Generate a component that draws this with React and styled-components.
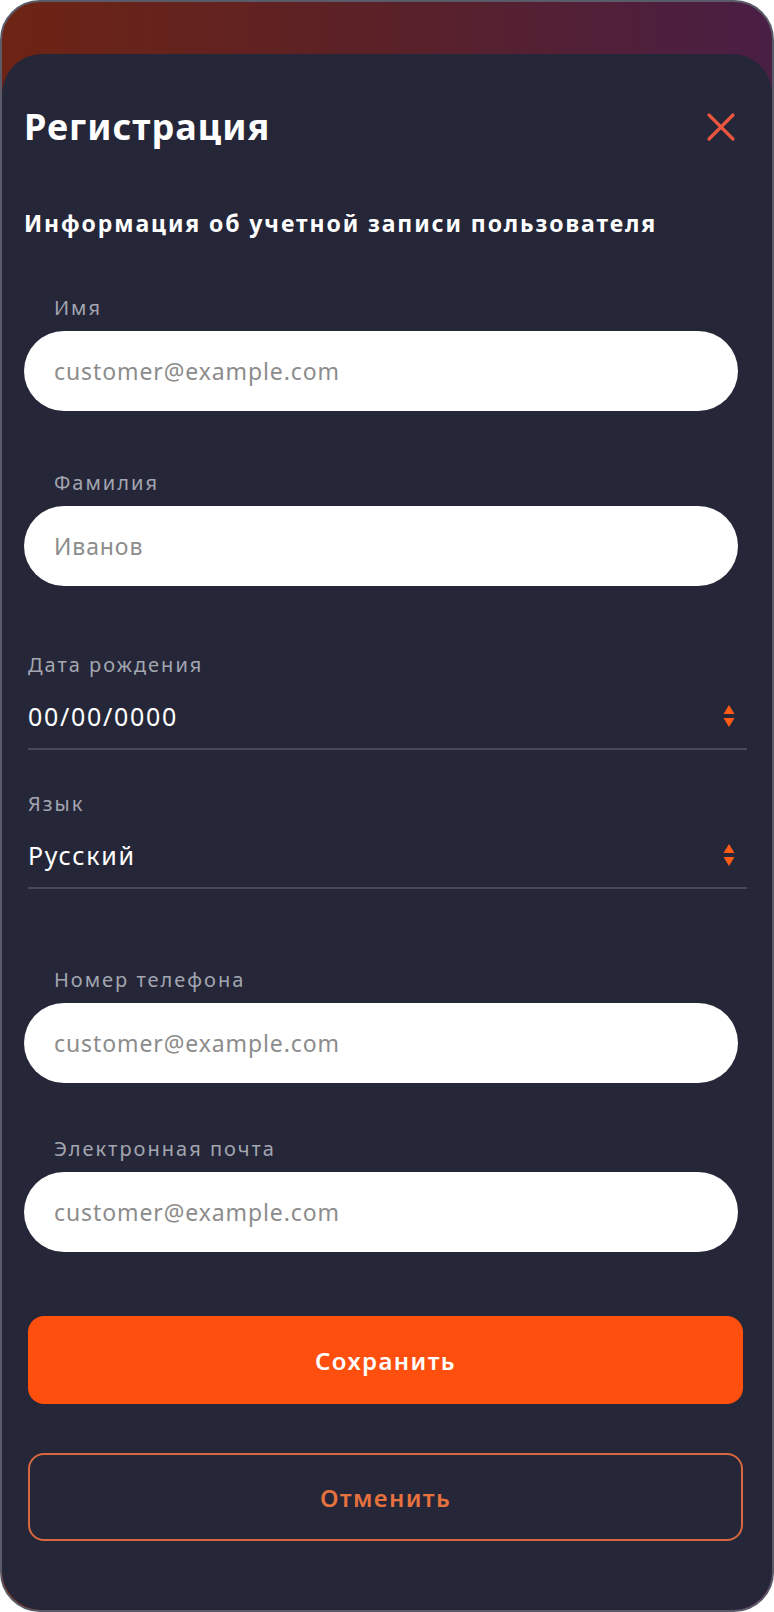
import React from 'react'
import styled, { createGlobalStyle } from 'styled-components'

const Global = createGlobalStyle`
    html, body {
        margin: 0;
        padding: 0;
        background: #ffffff;
    }
    * {
        box-sizing: border-box;
    }
`

const Frame = styled.div`
    width: 774px;
    min-height: 1612px;
    border: 2px solid #5a5b68;
    border-radius: 40px;
    overflow: hidden;
    background: linear-gradient(90deg, #6e2414 0%, #5a2128 50%, #4a1f45 100%);
    padding-top: 52px;
    display: flex;
    flex-direction: column;
    font-family: "Noto Sans", "Open Sans", sans-serif;
`

const Card = styled.div`
    flex: 1;
    background: #252739;
    border-radius: 40px;
    padding: 52px 0 66px 22px;
    display: flex;
    flex-direction: column;
`

const Header = styled.div`
    display: flex;
    align-items: center;
    justify-content: space-between;
    padding-right: 36px;
`

const Title = styled.h1`
    margin: 0;
    font-size: 36px;
    line-height: 42px;
    font-weight: 700;
    letter-spacing: 1px;
    color: #ffffff;
`

const Close = styled.button`
    border: 0;
    background: none;
    padding: 0;
    width: 30px;
    height: 30px;
    cursor: pointer;
`

const Subtitle = styled.h2`
    margin: 60px 0 0;
    font-size: 23px;
    line-height: 30px;
    font-weight: 700;
    letter-spacing: 1.9px;
    color: #ffffff;
`

const Field = styled.div`
    margin-top: ${p => p.$gap}px;
    display: flex;
    flex-direction: column;
    gap: 10px;
    width: 714px;
`

const Label = styled.label`
    font-size: 20px;
    line-height: 26px;
    letter-spacing: 2px;
    color: #a3a5b0;
    padding-left: ${p => p.$inset || 0}px;
`

const Input = styled.input`
    height: 80px;
    border: 0;
    border-radius: 40px;
    background: #ffffff;
    padding: 0 30px;
    font-family: inherit;
    font-size: 23px;
    letter-spacing: 0.9px;
    color: #333;
    outline: none;
    &::placeholder {
        color: #8c8c8c;
    }
`

const SelectField = styled.div`
    margin-top: ${p => p.$gap}px;
    margin-left: 4px;
    width: 719px;
    display: flex;
    flex-direction: column;
    gap: 22px;
`

const SelectRow = styled.div`
    display: flex;
    align-items: center;
    justify-content: space-between;
    padding: 0 11px 16px 0;
    border-bottom: 2px solid #474959;
`

const Value = styled.span`
    font-size: 25px;
    line-height: 32px;
    letter-spacing: 1.7px;
    color: #ffffff;
`

const Button = styled.button`
    margin-top: ${p => p.$gap}px;
    margin-left: 4px;
    width: 715px;
    height: 88px;
    border-radius: 16px;
    font-family: inherit;
    font-size: 24px;
    font-weight: 600;
    letter-spacing: 1.4px;
    cursor: pointer;
    border: 2px solid ${p => (p.$outline ? '#d8673f' : '#ff4f0e')};
    background: ${p => (p.$outline ? 'transparent' : '#ff4f0e')};
    color: ${p => (p.$outline ? '#e5713f' : '#ffffff')};
`

const CloseIcon = () => (
    <svg width="30" height="30" viewBox="0 0 30 30">
        <path d="M3 3 L27 27 M27 3 L3 27" stroke="#ea5640" strokeWidth="3.2" strokeLinecap="round" />
    </svg>
)

const Spinner = () => (
    <svg width="14" height="26" viewBox="0 0 14 26">
        <path d="M7 2 L12.5 11 H1.5 Z" fill="#ff5a16" />
        <path d="M1.5 15 H12.5 L7 24 Z" fill="#ff5a16" />
    </svg>
)

const PillField = ({ label, placeholder, gap }) => (
    <Field $gap={gap}>
        <Label $inset={30}>{label}</Label>
        <Input placeholder={placeholder} />
    </Field>
)

const Select = ({ label, value, gap }) => (
    <SelectField $gap={gap}>
        <Label>{label}</Label>
        <SelectRow>
            <Value>{value}</Value>
            <Spinner />
        </SelectRow>
    </SelectField>
)

export default function App() {
    return (
        <>
            <Global />
            <Frame>
                <Card>
                    <Header>
                        <Title>Регистрация</Title>
                        <Close aria-label="Закрыть"><CloseIcon /></Close>
                    </Header>
                    <Subtitle>Информация об учетной записи пользователя</Subtitle>
                    <PillField gap={57} label="Имя" placeholder="customer@example.com" />
                    <PillField gap={59} label="Фамилия" placeholder="Иванов" />
                    <Select gap={66} label="Дата рождения" value="00/00/0000" />
                    <Select gap={41} label="Язык" value="Русский" />
                    <PillField gap={78} label="Номер телефона" placeholder="customer@example.com" />
                    <PillField gap={53} label="Электронная почта" placeholder="customer@example.com" />
                    <Button $gap={64}>Сохранить</Button>
                    <Button $gap={49} $outline>Отменить</Button>
                </Card>
            </Frame>
        </>
    )
}
